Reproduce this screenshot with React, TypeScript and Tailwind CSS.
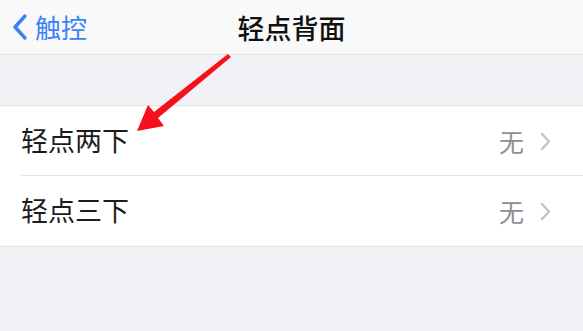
import React from "react";

const font = { fontFamily: '"Noto Sans CJK SC", "Noto Sans", sans-serif' };

function Row({ label, border }: { label: string; border?: boolean }) {
  return (
    <div className="relative flex h-[70px] items-center pl-[21px] pr-[32px]">
      <span className="-mt-[3px] text-[27px] leading-none text-[#1c1c1e]">{label}</span>
      <div className="ml-auto flex items-center gap-[16px]">
        <span className="text-[25px] leading-none text-[#8e8e93]">无</span>
        <svg width="11" height="19" viewBox="0 0 11 19">
          <path d="M2 2 L9 9.5 L2 17" fill="none" stroke="#c4c4c7" strokeWidth="2.4" strokeLinecap="round" strokeLinejoin="round" />
        </svg>
      </div>
      {border && <div className="absolute bottom-0 left-[21px] right-0 h-px bg-[#e3e3e6]" />}
    </div>
  );
}

export default function App() {
  return (
    <div className="relative h-[331px] w-[583px] overflow-hidden bg-[#f2f1f6]" style={font}>
      <div className="relative flex h-[55px] items-center border-b border-[#e2e2e5] bg-[#f9f9fa]">
        <div className="flex items-center pl-[12px] text-[#3c82f6]">
          <svg width="16" height="28" viewBox="0 0 16 28">
            <path d="M13 3 L3 14 L13 25" fill="none" stroke="#3c82f6" strokeWidth="3.4" strokeLinecap="round" strokeLinejoin="round" />
          </svg>
          <span className="ml-[7px] text-[26px] leading-none">触控</span>
        </div>
        <div className="absolute left-0 right-0 top-0 flex h-full items-center justify-center">
          <span className="text-[27px] font-medium leading-none text-[#111]">轻点背面</span>
        </div>
      </div>
      <div className="h-[50px]" />
      <div className="border-y border-[#e3e3e6] bg-white">
        <Row label="轻点两下" border />
        <Row label="轻点三下" />
      </div>
      <svg className="absolute left-0 top-0" width="583" height="331" viewBox="0 0 583 331">
        <path d="M228 54 L231 57 L158 118 L164 126 L137 131 L148 105 L154 112 Z" fill="#f5101a" strokeLinejoin="round" />
      </svg>
    </div>
  );
}
